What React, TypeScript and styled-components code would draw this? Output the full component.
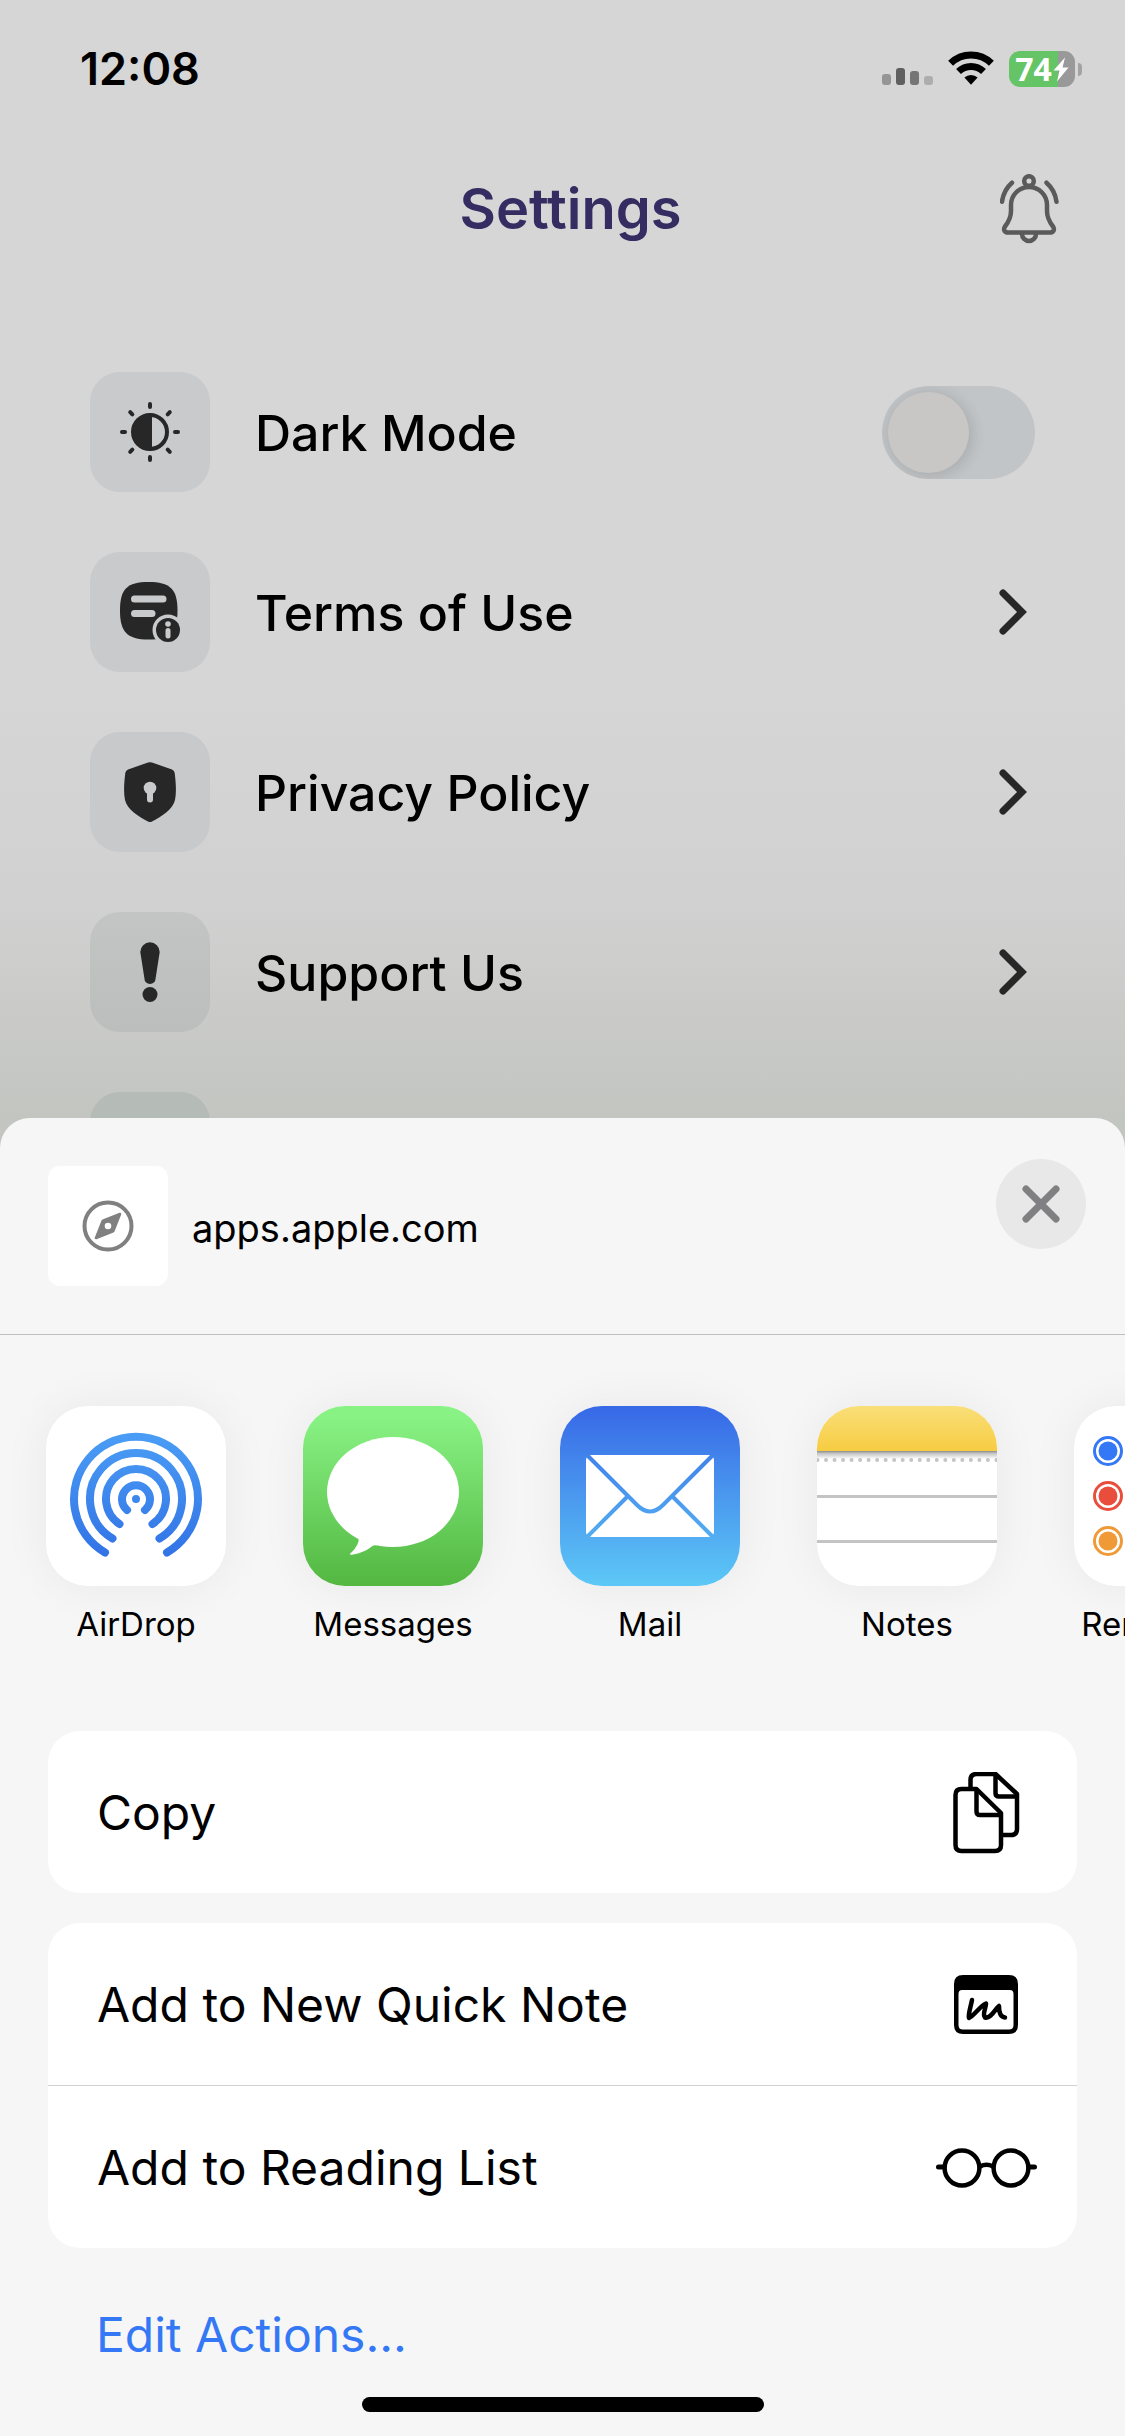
import React, { useState } from "react";
import styled, { createGlobalStyle } from "styled-components";

const GlobalStyle = createGlobalStyle`
  * { box-sizing: border-box; }
  body {
    margin: 0;
    font-family: Inter, "Liberation Sans", sans-serif;
    color: #000;
    background: #f6f6f6;
  }
  button, input { font: inherit; color: inherit; }
  svg { display: block; flex: none; }
`;

const Page = styled.div`
  display: flex;
  flex-direction: column;
  min-height: 100vh;
  overflow: hidden;
  background: linear-gradient(#d6d6d6 0, #d6d6d6 680px, #d1d1d1 900px, #c3c5c1 1118px);
`;

const Settings = styled.main`
  flex: 1 1 0;
  min-height: 0;
  overflow: hidden;
`;

const StatusBar = styled.div`
  display: flex;
  align-items: center;
  justify-content: space-between;
  height: 138px;
  padding: 0 43px 0 80px;
`;

const Clock = styled.time`
  font-size: 45px;
  line-height: 54px;
  font-weight: 600;
`;

const StatusIcons = styled.div`
  display: flex;
  align-items: center;
  gap: 15px;
`;

const Battery = styled.div`
  display: flex;
  align-items: center;
  gap: 3px;
`;

const BatteryBody = styled.div`
  display: flex;
  align-items: center;
  justify-content: center;
  gap: 1px;
  width: 66px;
  height: 36px;
  border-radius: 11px;
  color: #fff;
  background: linear-gradient(90deg, #65c466 49px, #999 49px);
  font: 700 32px/36px "Open Sans", sans-serif;
`;

const BatteryNub = styled.div`
  width: 4px;
  height: 13px;
  border-radius: 0 6px 6px 0;
  background: #a3a3a3;
`;

const Header = styled.header`
  display: grid;
  grid-template-columns: 1fr auto 1fr;
  align-items: center;
  height: 141px;
  padding: 0 65px 0 81px;
`;

const Title = styled.h1`
  grid-column: 2;
  margin: 0;
  font-size: 56px;
  line-height: 64px;
  font-weight: 600;
  color: #352d61;
`;

const IconButton = styled.button`
  justify-self: end;
  padding: 0;
  border: 0;
  background: none;
`;

const OptionList = styled.ul`
  display: flex;
  flex-direction: column;
  gap: 60px;
  margin: 0;
  padding: 93px 90px 0;
  list-style: none;
`;

const rowStyles = `
  display: flex;
  align-items: center;
  gap: 45px;
  width: 100%;
  padding: 0;
  border: 0;
  background: none;
  text-align: left;
`;

const OptionButton = styled.button`${rowStyles}`;
const OptionLabel = styled.label`${rowStyles}`;

const OptionIcon = styled.span<{ $tone: string }>`
  display: grid;
  place-items: center;
  flex: none;
  width: 120px;
  height: 120px;
  border-radius: 30px;
  background: ${(p) => p.$tone};
`;

const OptionText = styled.span`
  flex: 1;
  padding-top: 2px;
  font-size: 50px;
  line-height: 60px;
  font-weight: 500;
`;

const Toggle = styled.input`
  appearance: none;
  display: flex;
  align-items: center;
  width: 153px;
  height: 93px;
  margin: 0;
  padding: 0 6px;
  overflow: hidden;
  border-radius: 47px;
  background: #c2c5c7;
  &::before {
    content: "";
    width: 81px;
    height: 81px;
    border-radius: 50%;
    background: #c9c7c5;
    box-shadow: 2px 2px 14px 2px rgba(0, 0, 0, 0.12);
  }
  &:checked { justify-content: flex-end; background: #8f88b8; }
`;

const Sheet = styled.section`
  padding-bottom: 24px;
  border-radius: 30px 30px 0 0;
  background: #f6f6f6;
`;

const SheetHeader = styled.div`
  display: flex;
  align-items: center;
  gap: 24px;
  height: 217px;
  padding: 0 39px 0 48px;
  border-bottom: 1px solid #bfbfbf;
`;

const Preview = styled.div`
  display: grid;
  place-items: center;
  width: 120px;
  height: 120px;
  border-radius: 12px;
  background: #fff;
`;

const Host = styled.h2`
  flex: 1;
  margin: 0;
  padding-top: 4px;
  font-size: 38px;
  line-height: 48px;
  font-weight: 400;
`;

const CloseButton = styled.button`
  display: grid;
  place-items: center;
  align-self: flex-start;
  width: 90px;
  height: 90px;
  margin-top: 41px;
  padding: 0;
  border: 0;
  border-radius: 50%;
  background: #e8e8e8;
`;

const AppStrip = styled.div`
  display: flex;
  gap: 77px;
  padding: 71px 46px 87px;
  overflow: hidden;
`;

const AppButton = styled.button`
  display: flex;
  flex-direction: column;
  align-items: center;
  gap: 18px;
  flex: none;
  width: 180px;
  padding: 0;
  border: 0;
  background: none;
  font-size: 33px;
  line-height: 40px;
`;

const AppIcon = styled.span`
  overflow: hidden;
  width: 180px;
  height: 180px;
  border-radius: 42px;
  background: #fff;
  box-shadow: 0 0 48px rgba(0, 0, 0, 0.06);
`;

const Actions = styled.div`
  display: flex;
  flex-direction: column;
  gap: 30px;
  padding: 0 48px;
`;

const Card = styled.div`
  overflow: hidden;
  border-radius: 32px;
  background: #fff;
`;

const ActionButton = styled.button`
  display: flex;
  align-items: center;
  justify-content: space-between;
  width: 100%;
  height: 162px;
  padding: 2px 40px 0 49px;
  border: 0;
  background: none;
  font-size: 48px;
  line-height: 60px;
  text-align: left;
  & + & { height: 163px; border-top: 1px solid #d2d2d2; }
`;

const ActionIcon = styled.span`
  display: grid;
  place-items: center;
  width: 101px;
`;

const EditButton = styled.button`
  display: block;
  height: 106px;
  margin: 34px 48px 0;
  padding: 0 48px;
  border: 0;
  background: none;
  color: #3478f6;
  font-size: 48px;
  line-height: 60px;
`;

const HomeIndicator = styled.div`
  width: 402px;
  max-width: 60%;
  height: 15px;
  margin: 9px auto 0;
  border-radius: 8px;
  background: #000;
`;

const INK = "#272727";

const Signal = () => (
  <svg width="51" height="36" viewBox="0 0 51 36">
    <rect x="0" y="23" width="9" height="11" rx="3" fill="#959595" />
    <rect x="14" y="17" width="9" height="17" rx="3" fill="#5f5f5f" />
    <rect x="28" y="20" width="9" height="14" rx="3" fill="#767676" />
    <rect x="42" y="25" width="9" height="9" rx="3" fill="#adadad" />
  </svg>
);

const Wifi = () => (
  <svg width="46" height="36" viewBox="0 0 46 36">
    <g fill="none" stroke="#000" strokeWidth="7">
      <path d="M2.6 12.2a29.3 29.3 0 0 1 40.8 0" />
      <path d="M10.5 20.5a18 18 0 0 1 25 0" />
    </g>
    <path d="M16.4 26.6a9.6 9.6 0 0 1 13.2 0L23 33.8z" />
  </svg>
);

const Bolt = () => (
  <svg width="16" height="25" viewBox="0 0 16 25">
    <path d="M12 0.5L0.5 13.5H6.5L4 24.5L15.5 10.5H9.5z" fill="#fff" />
  </svg>
);

const Bell = () => (
  <svg width="60" height="70" viewBox="0 0 60 70" fill="none" stroke="#5a5a5a" strokeWidth="4.500" strokeLinecap="round" strokeLinejoin="round">
    <circle cx="29" cy="7" r="4.800" />
    <path d="M11 31a18 18 0 0 1 36 0v6c0 7 2.500 11 6 15.500c2 3 .5 6-3 6H8c-3.500 0-5-3-3-6c3.500-4.500 6-8.500 6-15.500z" />
    <path d="M22 60a7 7 0 0 0 14 0" />
    <path d="M12 8.700C6.500 13.500 3 20 2 27.700M46.500 8.700C52 13.500 55.500 20 56.500 27.700" />
  </svg>
);

const Sun = () => (
  <svg width="60" height="60" viewBox="-30 -30 60 60">
    <circle r="17" fill="none" stroke={INK} strokeWidth="4" />
    <path d="M2-17.500V17.500H0A17.500 17.500 0 0 1 0-17.500z" fill={INK} />
    {[0, 45, 90, 135, 180, 225, 270, 315].map((a) => (
      <line key={a} y1="-25" y2="-28" stroke={INK} strokeWidth="4" strokeLinecap="round" transform={`rotate(${a})`} />
    ))}
  </svg>
);

const Terms = () => (
  <svg width="60" height="60" viewBox="0 0 60 60">
    <path d="M28.500 0C50 0 57.500 7 57.500 28.500S50 57.500 28.500 57.500S0 50 0 28.500S7 0 28.500 0z" fill={INK} />
    <path d="M14.500 17H43M14.500 31.500H32" stroke="#c8cacb" strokeWidth="7" strokeLinecap="round" />
    <circle cx="48" cy="48" r="15.500" fill="#c8cacb" />
    <circle cx="48" cy="48" r="12" fill={INK} />
    <circle cx="48" cy="42" r="2.800" fill="#c8cacb" />
    <path d="M48 48.500v5.500" stroke="#c8cacb" strokeWidth="5" strokeLinecap="round" />
  </svg>
);

const Shield = () => (
  <svg width="60" height="60" viewBox="0 0 60 60">
    <path d="M28 .6q2-.8 4 0L52 7.500q2.500 1 2.700 3.500C56 22 56.500 30 55 38C53 47 42 54.500 32 59.400q-2 1-4 0C18 54.500 7 47 5 38C3.500 30 4 22 5.300 11q.2-2.500 2.700-3.500z" fill={INK} />
    <circle cx="30" cy="26" r="6.300" fill="#c8cacb" />
    <path d="M30 28v9.500" stroke="#c8cacb" strokeWidth="6" strokeLinecap="round" />
  </svg>
);

const Exclamation = () => (
  <svg width="60" height="60" viewBox="0 0 60 60" fill={INK}>
    <path d="M20.300 10a9.700 9.700 0 0 1 19.400 0L35.500 37a5.500 5 0 0 1-11 0z" />
    <circle cx="30" cy="52.500" r="7.500" />
  </svg>
);

const Chevron = () => (
  <svg width="36" height="46" viewBox="0 0 36 46">
    <path d="M4 4L23 23L4 42" fill="none" stroke={INK} strokeWidth="7" strokeLinecap="round" strokeLinejoin="miter" />
  </svg>
);

const Compass = () => (
  <svg width="52" height="52" viewBox="-26 -26 52 52">
    <circle r="23.500" fill="none" stroke="#808080" strokeWidth="4" />
    <path fillRule="evenodd" fill="#808080" d="M-5.500-6.500L11.500-13.200Q14-13.500 13.200-11.500L6.500 5.500L5.500 6.500L-11.500 13.200Q-14 13.500-13.200 11.500L-6.500-5.500zM0-3.300A3.300 3.300 0 1 0 0 3.300A3.300 3.300 0 1 0 0-3.300z" />
  </svg>
);

const Cross = () => (
  <svg width="38" height="38" viewBox="0 0 38 38">
    <path d="M4 4L34 34M34 4L4 34" stroke="#808082" strokeWidth="7" strokeLinecap="round" />
  </svg>
);

const AirDrop = () => (
  <svg width="180" height="180" viewBox="0 0 180 180">
    <defs>
      <linearGradient id="airdrop" gradientUnits="userSpaceOnUse" x1="0" y1="27" x2="0" y2="150">
        <stop offset="0" stopColor="#4a9df5" />
        <stop offset="1" stopColor="#3273e6" />
      </linearGradient>
    </defs>
    <g fill="none" stroke="url(#airdrop)" strokeWidth="8" strokeLinecap="round">
      <path d="M59 146.500A62 62 0 1 1 121 146.500" />
      <path d="M66.500 132.500A46 46 0 1 1 113.500 132.500" />
      <path d="M73.500 118A30 30 0 1 1 106.500 118" />
      <path d="M81 104A14 14 0 1 1 99 104" />
    </g>
    <circle cx="90" cy="93" r="4" fill="url(#airdrop)" />
  </svg>
);

const Messages = () => (
  <svg width="180" height="180" viewBox="0 0 180 180">
    <defs>
      <linearGradient id="messages" x1="0" y1="0" x2="0" y2="1">
        <stop offset="0.060" stopColor="#88f284" />
        <stop offset="1" stopColor="#53b741" />
      </linearGradient>
    </defs>
    <rect width="180" height="180" fill="url(#messages)" />
    <ellipse cx="90" cy="86" rx="66" ry="55" fill="#fff" />
    <path d="M53 130q4 3 2 7q-3 7-8 10.500q-.5 1.500 2 1.200c10-1.500 17-6 20-8.500q2-1.200 5-.7L85 120z" fill="#fff" />
  </svg>
);

const Mail = () => (
  <svg width="180" height="180" viewBox="0 0 180 180">
    <defs>
      <linearGradient id="mail" gradientUnits="userSpaceOnUse" x1="0" y1="0" x2="0" y2="180">
        <stop offset="0" stopColor="#3768e7" />
        <stop offset="1" stopColor="#5dc8f6" />
      </linearGradient>
    </defs>
    <rect width="180" height="180" fill="url(#mail)" />
    <rect x="26" y="49" width="128" height="82" rx="5" fill="#fff" />
    <g fill="none" stroke="url(#mail)" strokeWidth="4">
      <path d="M27 49L77 99Q90 112 103 99L153 49" />
      <path d="M27 131L67 91M153 131L113 91" />
    </g>
  </svg>
);

const Notes = () => (
  <svg width="180" height="180" viewBox="0 0 180 180">
    <defs>
      <linearGradient id="notes" x1="0" y1="0" x2="0" y2="1">
        <stop offset="0" stopColor="#f9df79" />
        <stop offset="1" stopColor="#f7cc41" />
      </linearGradient>
      <linearGradient id="fold" x1="0" y1="0" x2="0" y2="1">
        <stop offset="0" stopColor="#8c8c8c" />
        <stop offset="0.300" stopColor="#c4c4c4" />
        <stop offset="1" stopColor="#fff" />
      </linearGradient>
    </defs>
    <rect width="180" height="45" fill="url(#notes)" />
    <rect y="45" width="180" height="8" fill="url(#fold)" />
    <path d="M.5 54H181" stroke="#c4c4c4" strokeWidth="4" strokeLinecap="round" strokeDasharray="0 8.520" />
    <path d="M0 90.500H180M0 135.500H180" stroke="#c4c4c4" strokeWidth="3" />
  </svg>
);

const Reminders = () => (
  <svg width="180" height="180" viewBox="0 0 180 180">
    {["#3478f6", "#e94e3d", "#f09a37"].map((color, i) => (
      <g key={color}>
        <circle cx="34" cy={45 + i * 45} r="13.500" fill="none" stroke={color} strokeWidth="3" />
        <circle cx="34" cy={45 + i * 45} r="9.500" fill={color} />
        <path d={`M62 ${45 + i * 45}H180`} stroke="#c4c4c4" strokeWidth="3" />
      </g>
    ))}
  </svg>
);

const CopyPages = () => (
  <svg width="68" height="82" viewBox="0 0 68 82" fill="none" stroke="#000" strokeWidth="4.500" strokeLinejoin="round">
    <path d="M2.500 23q0-6 6-6H23.500L48 41V73q0 6-6 6H8.500q-6 0-6-6z" />
    <path d="M23.500 17V39.500q0 3.500 3.500 3.500H48" />
    <path d="M17.500 16V8q0-6 6-6H42.500L64 22V57q0 6-6 6H50" />
    <path d="M42.500 2V21q0 3.500 3.500 3.500H63" />
  </svg>
);

const QuickNote = () => (
  <svg width="66" height="60" viewBox="0 0 66 60">
    <path fillRule="evenodd" d="M9 0H55Q64 0 64 9V50Q64 59 55 59H9Q0 59 0 50V9Q0 0 9 0zM8 15Q4.500 15 4.500 19V50Q4.500 54.500 9 54.500H55Q59.500 54.500 59.500 50V19Q59.500 15 56 15z" />
    <path d="M18 25C16.500 33 14 39 15 43C20 41 26 31 32 28.500C32 33 28 39 31 42.500C37 44 41 34 45 31C45 37 46 42 51 42.500" fill="none" stroke="#000" strokeWidth="4.500" strokeLinecap="round" strokeLinejoin="round" />
  </svg>
);

const Glasses = () => (
  <svg width="101" height="40" viewBox="0 0 101 40" fill="none" stroke="#000" strokeWidth="4.500">
    <circle cx="26" cy="20" r="17.400" />
    <circle cx="75" cy="20" r="17.400" />
    <path d="M44 18.500q6.500-3.500 13 0" />
    <path d="M2.500 19H8M93 19H98.500" strokeWidth="5" strokeLinecap="round" />
  </svg>
);

const options = [
  { text: "Terms of Use", icon: <Terms />, tone: "#c8cacb" },
  { text: "Privacy Policy", icon: <Shield />, tone: "#c7c9ca" },
  { text: "Support Us", icon: <Exclamation />, tone: "linear-gradient(#c3c5c4, #bcbebd)" },
  { text: "", icon: null, tone: "#b5bbb6" },
];

const apps = [
  { name: "AirDrop", icon: <AirDrop /> },
  { name: "Messages", icon: <Messages /> },
  { name: "Mail", icon: <Mail /> },
  { name: "Notes", icon: <Notes /> },
  { name: "Reminders", icon: <Reminders /> },
];

const actionGroups = [
  [{ name: "Copy", icon: <CopyPages /> }],
  [
    { name: "Add to New Quick Note", icon: <QuickNote /> },
    { name: "Add to Reading List", icon: <Glasses /> },
  ],
];

export default function App() {
  const [dark, setDark] = useState(false);
  return (
    <>
      <GlobalStyle />
      <Page>
        <Settings>
          <StatusBar>
            <Clock>12:08</Clock>
            <StatusIcons>
              <Signal />
              <Wifi />
              <Battery>
                <BatteryBody>74<Bolt /></BatteryBody>
                <BatteryNub />
              </Battery>
            </StatusIcons>
          </StatusBar>
          <Header>
            <Title>Settings</Title>
            <IconButton aria-label="Notifications"><Bell /></IconButton>
          </Header>
          <OptionList>
            <li>
              <OptionLabel htmlFor="dark-mode">
                <OptionIcon $tone="#c8cacb"><Sun /></OptionIcon>
                <OptionText>Dark Mode</OptionText>
                <Toggle id="dark-mode" type="checkbox" checked={dark} onChange={(e) => setDark(e.target.checked)} />
              </OptionLabel>
            </li>
            {options.map((o) => (
              <li key={o.text}>
                <OptionButton>
                  <OptionIcon $tone={o.tone}>{o.icon}</OptionIcon>
                  <OptionText>{o.text}</OptionText>
                  <Chevron />
                </OptionButton>
              </li>
            ))}
          </OptionList>
        </Settings>
        <Sheet>
          <SheetHeader>
            <Preview><Compass /></Preview>
            <Host>apps.apple.com</Host>
            <CloseButton aria-label="Close"><Cross /></CloseButton>
          </SheetHeader>
          <AppStrip>
            {apps.map((a) => (
              <AppButton key={a.name}>
                <AppIcon>{a.icon}</AppIcon>
                {a.name}
              </AppButton>
            ))}
          </AppStrip>
          <Actions>
            {actionGroups.map((group) => (
              <Card key={group[0].name}>
                {group.map((a) => (
                  <ActionButton key={a.name}>
                    {a.name}
                    <ActionIcon>{a.icon}</ActionIcon>
                  </ActionButton>
                ))}
              </Card>
            ))}
          </Actions>
          <EditButton>Edit Actions...</EditButton>
          <HomeIndicator />
        </Sheet>
      </Page>
    </>
  );
}
